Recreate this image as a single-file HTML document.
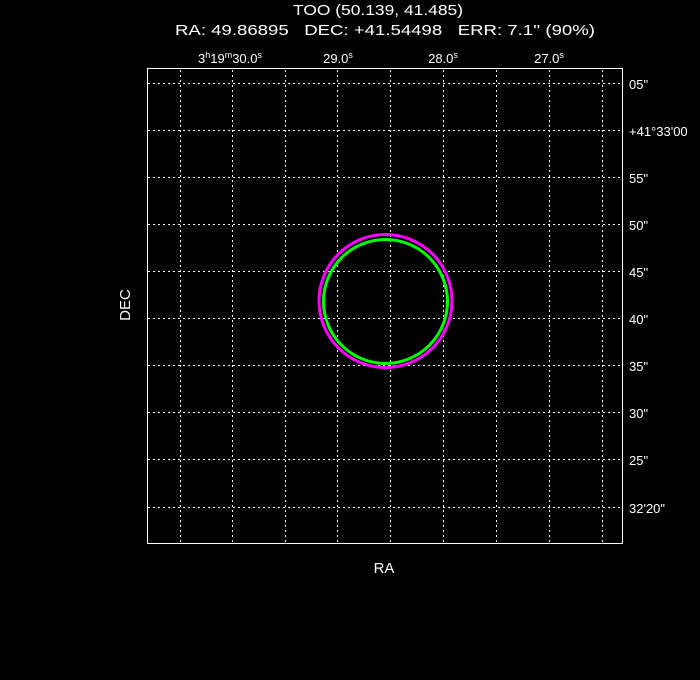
<!DOCTYPE html>
<html><head><style>
html,body{margin:0;padding:0;background:#000;width:700px;height:680px;overflow:hidden}
svg text{font-family:"Liberation Sans",sans-serif;fill:#fff;white-space:pre}
</style></head><body>
<svg width="700" height="680" xmlns="http://www.w3.org/2000/svg">
<text x="293" y="15" font-size="15" textLength="170" lengthAdjust="spacingAndGlyphs">TOO (50.139, 41.485)</text>
<text x="175" y="35" font-size="15" textLength="420" lengthAdjust="spacingAndGlyphs" xml:space="preserve">RA: 49.86895   DEC: +41.54498   ERR: 7.1'' (90%)</text>
<g font-size="13" text-anchor="middle">
<text x="230" y="63">3<tspan font-size="9" dy="-5">h</tspan><tspan dy="5">19</tspan><tspan font-size="9" dy="-5">m</tspan><tspan dy="5">30.0</tspan><tspan font-size="9" dy="-5">s</tspan></text>
<text x="338" y="63">29.0<tspan font-size="9" dy="-5">s</tspan></text>
<text x="443" y="63">28.0<tspan font-size="9" dy="-5">s</tspan></text>
<text x="549" y="63">27.0<tspan font-size="9" dy="-5">s</tspan></text>
</g>
<g stroke="#fff" stroke-width="1" stroke-dasharray="2,3" fill="none">
<path d="M180.5 70V543M232.5 70V543M285.5 70V543M337.5 70V543M390.5 70V543M443.5 70V543M496.5 70V543M549.5 70V543M602.5 70V543"/>
<path d="M148 83.5H622M148 130.5H622M148 177.5H622M148 224.5H622M148 271.5H622M148 318.5H622M148 365.5H622M148 412.5H622M148 459.5H622M148 507.5H622"/>
</g>
<rect x="147.5" y="68.5" width="475" height="475" fill="none" stroke="#fff" stroke-width="1"/>
<g font-size="13">
<text x="629" y="89">05"</text>
<text x="629" y="136">+41°33'00</text>
<text x="629" y="183">55"</text>
<text x="629" y="230">50"</text>
<text x="629" y="277">45"</text>
<text x="629" y="324">40"</text>
<text x="629" y="371">35"</text>
<text x="629" y="418">30"</text>
<text x="629" y="465">25"</text>
<text x="629" y="513">32'20"</text>
</g>
<circle cx="385.5" cy="301" r="66.5" fill="none" stroke="#f0f" stroke-width="3"/>
<circle cx="385.5" cy="301.5" r="62" fill="none" stroke="#0f0" stroke-width="3"/>
<text x="384" y="573" font-size="15" text-anchor="middle">RA</text>
<text x="130" y="305" font-size="15" text-anchor="middle" transform="rotate(-90 130 305)">DEC</text>
</svg>
</body></html>
